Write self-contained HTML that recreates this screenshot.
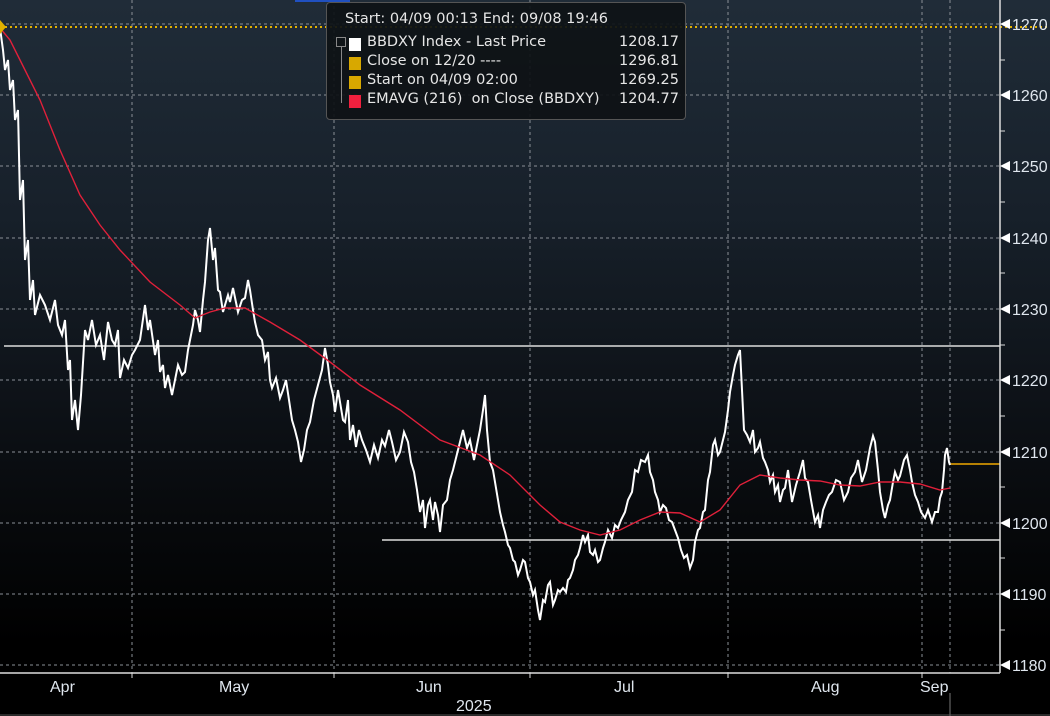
<!DOCTYPE html>
<html><head><meta charset="utf-8"><style>
html,body{margin:0;padding:0;}
body{width:1050px;height:716px;overflow:hidden;background:#000;font-family:"Liberation Sans",sans-serif;position:relative}
#bg{position:absolute;left:0;top:0;width:1050px;height:716px;background:linear-gradient(#202c38 0%,#17202a 30%,#0a0d11 65%,#000 90%)}
svg{position:absolute;left:0;top:0}
.lg{position:absolute;left:326px;top:2px;width:358px;height:116px;background:rgba(14,18,22,0.93);border:1px solid #555;border-radius:4px;color:#e6e6e6;font-size:14.5px;font-family:"DejaVu Sans",sans-serif}
.lg div{position:absolute;white-space:nowrap}
.sq{position:absolute;left:22px;width:12px;height:13px}
.v{right:6px}
</style></head><body>
<div id="bg"></div>
<svg width="1050" height="716">
<g stroke="#8a8f96" stroke-width="1" stroke-dasharray="3,3">
<line x1="0" y1="24" x2="1000" y2="24"/><line x1="0" y1="95" x2="1000" y2="95"/><line x1="0" y1="166" x2="1000" y2="166"/><line x1="0" y1="238" x2="1000" y2="238"/><line x1="0" y1="309" x2="1000" y2="309"/><line x1="0" y1="380" x2="1000" y2="380"/><line x1="0" y1="452" x2="1000" y2="452"/><line x1="0" y1="523" x2="1000" y2="523"/><line x1="0" y1="594" x2="1000" y2="594"/><line x1="0" y1="665" x2="1000" y2="665"/>
<line x1="132" y1="0" x2="132" y2="673"/><line x1="334" y1="0" x2="334" y2="673"/><line x1="530" y1="0" x2="530" y2="673"/><line x1="728" y1="0" x2="728" y2="673"/><line x1="922" y1="0" x2="922" y2="673"/><line x1="950" y1="0" x2="950" y2="673"/>
</g>
<line x1="0" y1="27" x2="1050" y2="27" stroke="#e0b000" stroke-width="2" stroke-dasharray="2,3"/>
<line x1="4" y1="346" x2="1000" y2="346" stroke="#ddd" stroke-width="1.5"/>
<line x1="382" y1="540" x2="1000" y2="540" stroke="#ddd" stroke-width="1.5"/>
<line x1="950" y1="464" x2="1000" y2="464" stroke="#f0a800" stroke-width="1.5"/>
<polyline fill="none" stroke="#fff" stroke-width="2" points="0,28 3,50 5,70 8,60 10,90 13,80 15,120 18,110 20,200 23,180 25,260 28,240 30,300 33,280 35,315 40,295 45,305 50,320 55,300 58,325 62,335 65,320 68,370 70,360 72,420 75,400 78,430 81,395 85,330 88,340 92,320 96,345 100,335 104,360 108,322 112,340 115,345 118,330 120,378 124,360 128,368 132,355 135,350 140,340 145,305 148,330 150,320 155,355 158,340 160,372 163,365 165,388 168,375 172,395 175,380 178,365 182,375 185,372 188,350 190,340 193,325 195,310 198,320 200,332 203,300 205,282 208,240 210,228 213,260 215,248 218,290 220,292 223,312 225,305 228,295 230,302 233,288 238,312 242,300 245,298 248,280 250,290 253,310 255,322 258,335 262,340 265,360 268,352 270,380 272,388 276,378 280,398 283,390 286,380 289,400 292,420 295,430 298,442 301,462 304,450 307,430 310,422 314,400 318,385 322,370 325,348 328,365 330,382 333,395 335,412 338,390 340,402 343,420 345,422 348,400 350,440 353,425 356,447 359,430 362,440 366,450 370,462 374,445 378,458 382,440 385,446 389,430 392,442 396,460 400,452 404,432 408,442 411,462 414,472 417,490 420,512 423,500 425,528 428,505 430,500 433,520 435,502 438,515 440,532 443,505 447,500 450,480 453,470 456,458 460,442 463,430 467,448 470,440 474,460 477,445 480,430 483,410 485,395 487,430 490,462 493,470 495,482 498,500 500,512 503,525 505,532 508,545 510,548 513,560 515,562 518,575 520,570 523,560 525,562 528,578 530,582 533,595 535,590 538,610 540,620 543,600 545,602 548,585 550,582 553,605 555,600 558,590 560,592 563,588 566,592 568,580 570,578 573,570 575,560 578,555 580,548 583,535 585,542 588,535 590,552 593,555 595,550 598,562 600,560 603,548 605,542 608,530 612,538 615,525 618,528 621,520 625,512 628,500 632,492 635,470 638,472 641,460 645,462 648,455 650,472 653,480 655,492 658,500 660,512 663,505 666,508 669,520 672,522 675,530 678,538 681,550 684,558 687,555 690,568 693,560 695,542 698,530 700,528 703,512 705,510 708,480 710,472 713,445 715,440 718,455 720,452 723,440 725,432 728,410 730,392 733,375 735,365 738,355 740,350 742,390 744,430 747,435 750,442 753,430 755,452 758,448 760,442 763,458 765,462 768,470 770,482 773,475 775,492 778,485 780,502 783,490 785,488 788,470 792,502 796,485 800,472 803,460 805,478 808,482 811,500 815,522 818,515 820,528 823,510 826,502 829,495 832,492 836,480 840,482 844,500 848,492 851,478 855,472 858,460 862,482 866,470 870,448 873,436 875,442 878,470 880,492 883,510 885,518 888,505 890,500 893,482 895,472 898,480 900,476 904,460 907,455 910,470 912,482 915,495 918,502 921,512 925,518 928,510 932,522 935,512 938,512 940,498 942,492 944,470 945,455 947,448 949,462 950,465"/>
<polyline fill="none" stroke="#e0203a" stroke-width="1.4" points="0,28 10,40 20,60 40,100 60,150 80,195 100,225 120,250 150,282 180,305 195,318 210,312 225,308 245,308 270,322 300,340 330,362 360,385 400,410 440,440 480,455 510,475 540,505 560,522 580,530 600,535 620,530 640,520 660,512 680,513 700,522 720,510 740,485 760,475 780,478 800,480 820,481 840,485 860,486 880,482 900,482 920,484 940,490 950,488"/>
<polygon points="0,20 6,27 0,34" fill="#e0b000"/>
<line x1="1000" y1="0" x2="1000" y2="673" stroke="#ddd" stroke-width="1.5"/>
<line x1="0" y1="673" x2="1000" y2="673" stroke="#ddd" stroke-width="1.5"/>
<g stroke="#ddd"><line x1="132" y1="673" x2="132" y2="678"/><line x1="334" y1="673" x2="334" y2="678"/><line x1="530" y1="673" x2="530" y2="678"/><line x1="728" y1="673" x2="728" y2="678"/><line x1="922" y1="673" x2="922" y2="678"/>
<line x1="950" y1="693" x2="950" y2="716" stroke="#777"/>
<line x1="1000" y1="60" x2="1005" y2="60"/><line x1="1000" y1="131" x2="1005" y2="131"/><line x1="1000" y1="202" x2="1005" y2="202"/><line x1="1000" y1="273" x2="1005" y2="273"/><line x1="1000" y1="345" x2="1005" y2="345"/><line x1="1000" y1="416" x2="1005" y2="416"/><line x1="1000" y1="487" x2="1005" y2="487"/><line x1="1000" y1="558" x2="1005" y2="558"/><line x1="1000" y1="630" x2="1005" y2="630"/></g>
<g fill="#fff"><polygon points="1000,24 1010,19 1010,29"/><polygon points="1000,95 1010,90 1010,100"/><polygon points="1000,166 1010,161 1010,171"/><polygon points="1000,238 1010,233 1010,243"/><polygon points="1000,309 1010,304 1010,314"/><polygon points="1000,380 1010,375 1010,385"/><polygon points="1000,452 1010,447 1010,457"/><polygon points="1000,523 1010,518 1010,528"/><polygon points="1000,594 1010,589 1010,599"/><polygon points="1000,665 1010,660 1010,670"/></g>
<g fill="#dfe6ee" font-family="Liberation Sans, sans-serif" font-size="16">
<text x="1012" y="30">1270</text><text x="1012" y="101">1260</text><text x="1012" y="172">1250</text><text x="1012" y="244">1240</text><text x="1012" y="315">1230</text><text x="1012" y="386">1220</text><text x="1012" y="458">1210</text><text x="1012" y="529">1200</text><text x="1012" y="600">1190</text><text x="1012" y="671">1180</text>
<text x="50" y="692">Apr</text><text x="219" y="692">May</text><text x="416" y="692">Jun</text><text x="614" y="692">Jul</text><text x="811" y="692">Aug</text><text x="920" y="692">Sep</text><text x="456" y="711">2025</text>
</g>
<rect x="295" y="0" width="55" height="2" fill="#2050c0"/>
<line x1="0" y1="715" x2="1050" y2="715" stroke="#555"/>
</svg>
<div class="lg">
<div style="left:18px;top:8px">Start: 04/09 00:13 End: 09/08 19:46</div>
<div style="left:9px;top:34px;width:8px;height:8px;border:1px solid #888"></div>
<div style="left:14px;top:44px;width:1px;height:56px;background:#888"></div>
<div class="sq" style="top:35px;background:#fff"></div><div style="left:40px;top:31px">BBDXY Index - Last Price</div><div class="v" style="top:31px">1208.17</div>
<div class="sq" style="top:54px;background:#d8a800"></div><div style="left:40px;top:50px">Close on 12/20 ----</div><div class="v" style="top:50px">1296.81</div>
<div class="sq" style="top:73px;background:#d8a800"></div><div style="left:40px;top:69px">Start on 04/09 02:00</div><div class="v" style="top:69px">1269.25</div>
<div class="sq" style="top:92px;background:#f0203e"></div><div style="left:40px;top:88px">EMAVG (216)&nbsp; on Close (BBDXY)</div><div class="v" style="top:88px">1204.77</div>
</div>
</body></html>
